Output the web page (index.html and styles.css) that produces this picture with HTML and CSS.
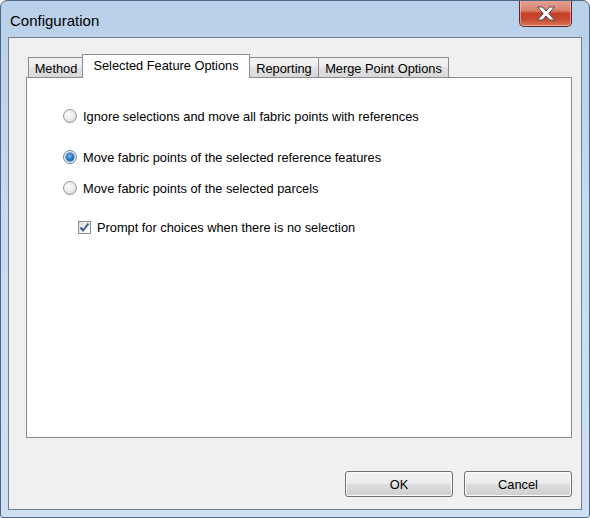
FILE: index.html
```html
<!DOCTYPE html>
<html>
<head>
<meta charset="utf-8">
<title>Configuration</title>
<link rel="stylesheet" href="styles.css">
</head>
<body>
<div class="window">
  <div class="titlebar">
    <span class="title">Configuration</span>
    <div class="close-btn">
      <svg width="20" height="15" viewBox="0 0 20 15">
        <path d="M1.5 1 H6.5 L10 5 L13.5 1 H18.5 L12.8 7.5 L18.5 14 H13.5 L10 10 L6.5 14 H1.5 L7.2 7.5 Z" fill="#ffffff" stroke="#4a4a4a" stroke-width="1" stroke-linejoin="round"/>
      </svg>
    </div>
  </div>
  <div class="client">
    <div class="tabcontrol">
      <div class="tabrow">
        <div class="tab tab-method">Method</div>
        <div class="tab tab-active">Selected Feature Options</div>
        <div class="tab tab-report">Reporting</div>
        <div class="tab tab-merge">Merge Point Options</div>
      </div>
      <div class="page">
        <label class="opt opt-1"><span class="radio"></span><span>Ignore selections and move all fabric points with references</span></label>
        <label class="opt opt-2"><span class="radio checked"><span class="dot"></span></span><span>Move fabric points of the selected reference features</span></label>
        <label class="opt opt-3"><span class="radio"></span><span>Move fabric points of the selected parcels</span></label>
        <label class="opt opt-check"><span class="checkbox">
          <svg width="11" height="11" viewBox="0 0 11 11"><path d="M1.5 5.5 L4 8.5 L9.5 1.5" fill="none" stroke="#3d5a96" stroke-width="2"/></svg>
        </span><span>Prompt for choices when there is no selection</span></label>
      </div>
    </div>
    <div class="buttons">
      <div class="btn">OK</div>
      <div class="btn">Cancel</div>
    </div>
  </div>
</div>
</body>
</html>
```

FILE: styles.css
```css
html, body {
  margin: 0;
  padding: 0;
  background: #ffffff;
}

.window {
  box-sizing: border-box;
  width: 590px;
  height: 518px;
  display: flex;
  flex-direction: column;
  padding: 0 7px 7px 7px;
  border: 1px solid #4d6580;
  border-radius: 7px 7px 3px 3px;
  background: linear-gradient(180deg, #b9d0ea 0%, #c7dbf0 45%, #cfe0f2 100%);
  font-family: "Liberation Sans", Arial, sans-serif;
  overflow: hidden;
}

.titlebar {
  height: 36px;
  display: flex;
  align-items: flex-start;
  flex-shrink: 0;
}

.title {
  font-size: 15px;
  color: #000;
  margin-top: 11px;
  margin-left: 2px;
}

.close-btn {
  margin-left: auto;
  margin-right: 10px;
  margin-top: -1px;
  width: 53px;
  height: 27px;
  box-sizing: border-box;
  border: 1px solid #5b2a24;
  border-top: none;
  border-radius: 0 0 5px 5px;
  background: linear-gradient(180deg, #e4a596 0%, #d8826e 40%, #c63f27 52%, #c84a30 75%, #d9765a 100%);
  box-shadow: inset 0 0 0 1px rgba(255, 210, 200, 0.55);
  display: flex;
  align-items: center;
  justify-content: center;
}

.client {
  flex: 1;
  display: flex;
  flex-direction: column;
  background: #f0f0f0;
  border: 1px solid #6e7f92;
  padding: 16px 9px 12px 17px;
}

.tabcontrol {
  flex: 1;
  display: flex;
  flex-direction: column;
}

.tabrow {
  display: flex;
  align-items: flex-end;
  height: 23px;
  padding-left: 2px;
  position: relative;
  z-index: 1;
}

.tab {
  box-sizing: border-box;
  height: 20px;
  font-size: 12.8px;
  color: #000;
  border: 1px solid #898c95;
  border-bottom: none;
  background: linear-gradient(180deg, #f3f3f3 0%, #ececec 50%, #e2e2e2 50%, #d8d8d8 100%);
  display: flex;
  align-items: center;
  justify-content: center;
  padding-top: 1px;
  margin-left: -1px;
}

.tab:first-child {
  margin-left: 0;
}

.tab-method { width: 56px; }
.tab-report { width: 70px; margin-left: 0; }
.tab-merge { width: 131px; }

.tab-active {
  width: 168px;
  height: 24px;
  margin-left: -2px;
  margin-right: -1px;
  margin-bottom: -1px;
  background: #ffffff;
  padding-top: 0;
  padding-bottom: 3px;
  position: relative;
  z-index: 2;
}

.page {
  flex: 1;
  background: #ffffff;
  border: 1px solid #898c95;
  display: flex;
  flex-direction: column;
  align-items: flex-start;
  padding: 30px 0 0 36px;
  font-size: 12.8px;
  color: #000;
}

.opt {
  display: flex;
  align-items: center;
  height: 16px;
  gap: 6px;
}

.opt-2 { margin-top: 25px; }
.opt-3 { margin-top: 15px; }
.opt-check { margin-top: 23px; margin-left: 15px; gap: 6px; }

.radio {
  box-sizing: border-box;
  width: 14px;
  height: 14px;
  border-radius: 50%;
  border: 1px solid #92979b;
  background: radial-gradient(circle at 40% 35%, #fdfdfd 0%, #ececec 45%, #cfcfcf 100%);
  display: flex;
  align-items: center;
  justify-content: center;
}

.radio.checked {
  border-color: #6a8ab0;
  background: radial-gradient(circle at 50% 50%, #eaf2fb 0%, #d9e6f3 100%);
}

.dot {
  width: 8px;
  height: 8px;
  border-radius: 50%;
  background: radial-gradient(circle at 45% 40%, #7fc2f4 0%, #2b7fc8 45%, #0f3f74 100%);
  box-shadow: 0 0 0 0.5px #23446a;
}

.checkbox {
  box-sizing: border-box;
  width: 13px;
  height: 13px;
  border: 1px solid #8f8f8f;
  background: linear-gradient(135deg, #dcdcdc 0%, #f4f4f4 60%, #ffffff 100%);
  display: flex;
  align-items: center;
  justify-content: center;
}

.buttons {
  display: flex;
  justify-content: flex-end;
  gap: 11px;
  margin-top: 33px;
}

.btn {
  box-sizing: border-box;
  width: 108px;
  height: 26px;
  border: 1px solid #707070;
  border-radius: 3px;
  background: linear-gradient(180deg, #f2f2f2 0%, #ebebeb 48%, #dddddd 52%, #cfcfcf 100%);
  box-shadow: inset 0 0 0 1px #fbfbfb;
  font-size: 12.8px;
  color: #000;
  display: flex;
  align-items: center;
  justify-content: center;
}
```
